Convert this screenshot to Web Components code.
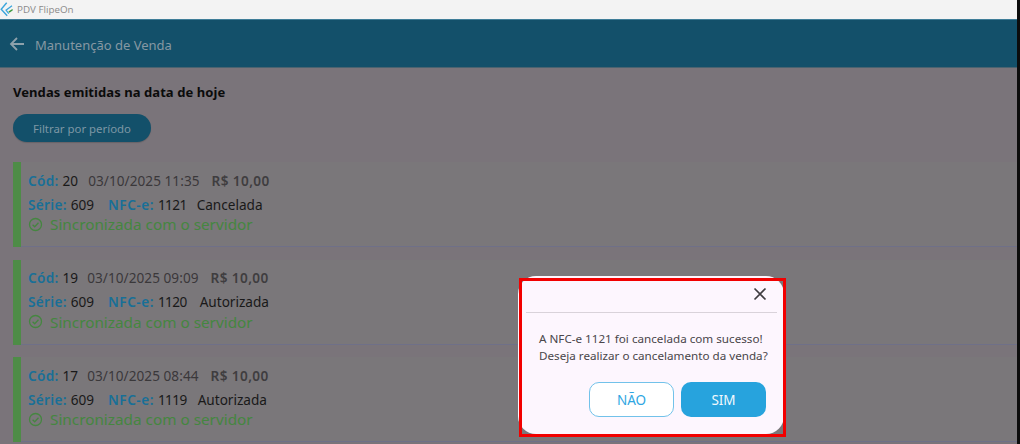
<!DOCTYPE html>
<html lang="pt-BR"><head><meta charset="utf-8"><title>PDV FlipeOn</title>
<style>
html,body{margin:0;padding:0;width:1020px;height:444px;overflow:hidden;background:#0c0c0c;font-family:"Noto Sans",sans-serif}
</style></head><body>
<pdv-window>
  <sale-row cod="20" when="03/10/2025 11:35" gap="10" nfce="1121" status="Cancelada" sgap="10"></sale-row>
  <sale-row cod="19" when="03/10/2025 09:09" gap="9" nfce="1120" status="Autorizada" sgap="13"></sale-row>
  <sale-row cod="17" when="03/10/2025 08:44" gap="9" nfce="1119" status="Autorizada" sgap="11"></sale-row>
</pdv-window>
<script>
const def=(n,html,setup)=>customElements.define(n,class extends HTMLElement{
  constructor(){super();this.attachShadow({mode:'open'}).innerHTML=html;}
  connectedCallback(){setup&&setup(this,this.shadowRoot);}
});
def('title-bar',`<style>
:host{display:flex;align-items:center;height:19px;background:#f3f3f3;border-bottom:1px solid #3f7d98;font:9.8px "Open Sans","Noto Sans",sans-serif;color:#8a8a8a;flex:none}
svg{margin-right:3px;flex:none}
</style><svg width="14" height="19" viewBox="0 0 14 19"><path d="M6.7 2.7 1.2 9.2l6 6.5" fill="none" stroke="#3aa5dc" stroke-width="1.4"/><path d="M12 5.7 6 10.2l2.8 3.4" fill="none" stroke="#3aa5dc" stroke-width="1.2"/><path d="M8.4 11.6l4-2.6.5 1.3-3.4 2.4z" fill="#3c9a40"/></svg><span>PDV FlipeOn</span>`);
def('app-header',`<style>
:host{display:flex;align-items:center;height:47px;background:#13506a;border-bottom:1px solid #4a6370;color:#8698a3;flex:none;font-size:13px}
svg{margin-left:9px;margin-right:10px;flex:none}
span{position:relative;top:1px}
</style><svg width="16" height="16" viewBox="0 0 16 16"><path d="M15 8H2.5M8 2 2 8l6 6" fill="none" stroke="#8ea1ab" stroke-width="1.8"/></svg><span>Manutenção de Venda</span>`);
def('pill-button',`<style>
:host{display:inline-flex;align-items:center;justify-content:center;width:138px;height:28px;border-radius:14px;background:#13506a;color:#7d97a5;font-size:11.4px;box-shadow:0 1px 1px rgba(0,0,0,.15)}
</style><slot></slot>`);
def('sale-row',`<style>
:host{display:flex;height:85px;font-size:13.6px;color:#191919;margin-bottom:12.5px}
.bar{width:8px;flex:none;background:#4e8c47}
.body{flex:1;background:#7a777a;border-bottom:1px solid #6f7088;padding-left:7px;min-width:0}
.l{display:flex;align-items:center;white-space:nowrap}
.l1{height:20px;padding-top:8px}
.l2{height:20px;margin-top:4px}
.l3{height:22px;margin-top:-1px;color:#458640;font-size:15.3px}
b{font-weight:600;color:#186f97;letter-spacing:.3px;margin-right:.5px}
b.nf{letter-spacing:.5px}
.num{letter-spacing:-.6px}
.when{color:#3a383a;letter-spacing:.05px}
.val{color:#3f3d3f;font-weight:600;margin-left:12px;letter-spacing:.4px}
svg{margin-right:7px;flex:none}
</style>
<div class="bar"></div><div class="body">
<div class="l l1"><b>Cód:</b>&nbsp;<span class="c"></span><span class="when"></span><span class="val">R$ 10,00</span></div>
<div class="l l2"><b>Série:</b>&nbsp;<span>609</span><b class="nf" style="margin-left:14px">NFC-e:</b>&nbsp;<span class="n num"></span><span class="s"></span></div>
<div class="l l3"><svg width="15" height="15" viewBox="0 0 15 15"><circle cx="7.5" cy="7.5" r="6" fill="none" stroke="#458640" stroke-width="1.3"/><path d="M4.6 7.7l2.1 2.1 3.8-4.1" fill="none" stroke="#458640" stroke-width="1.3"/></svg><span>Sincronizada com o servidor</span></div>
</div>`,
(h,r)=>{r.querySelector('.c').textContent=h.getAttribute('cod');
 const w=r.querySelector('.when');w.textContent=h.getAttribute('when');w.style.marginLeft=h.getAttribute('gap')+'px';
 r.querySelector('.n').textContent=h.getAttribute('nfce');
 const s=r.querySelector('.s');s.textContent=h.getAttribute('status');s.style.marginLeft=h.getAttribute('sgap')+'px';});
def('confirm-dialog',`<style>
:host{position:absolute;left:518px;top:276px;width:266px;height:158px;background:#fdf6fe;border-radius:18px;box-sizing:border-box;padding:0 7px 0 8px;color:#4a464b;font-size:11.66px;display:block}
.top{display:flex;justify-content:flex-end;align-items:center;height:36px;border-bottom:1px solid #d9d2da;padding-right:10px}
.msg{line-height:17px;margin:17px 0 0 13px;white-space:nowrap}
.btns{display:flex;justify-content:flex-end;gap:7px;margin-top:18px;padding-right:11px}
.btn{width:85px;height:35px;box-sizing:border-box;border-radius:10px;display:flex;align-items:center;justify-content:center;font-size:13.5px}
.no{background:#fff;border:1.5px solid #72c2ea;color:#2fa6e2}
.yes{background:#27a3dd;color:#f2f9fd}
</style><div class="top"><svg width="14" height="14" viewBox="0 0 14 14"><path d="M1.5 1.5l11 11M12.5 1.5l-11 11" stroke="#3f3c40" stroke-width="1.7" fill="none"/></svg></div>
<div class="msg">A NFC-e 1121 foi cancelada com sucesso!<br>Deseja realizar o cancelamento da venda?</div>
<div class="btns"><div class="btn no">NÃO</div><div class="btn yes">SIM</div></div>`);
def('pdv-window',`<style>
:host{display:flex;flex-direction:column;width:1017px;height:444px;position:relative;overflow:hidden;background:#7a747a}
main{flex:1;padding:0 0 0 13px;overflow:hidden}
h1{margin:15px 0 13px;font-size:13px;font-weight:700;color:#0b0b0b;line-height:18px;letter-spacing:.07px}
.list{margin-top:20px}
.red{position:absolute;left:519px;top:278px;width:267px;height:159px;box-sizing:border-box;border:3px solid #f20000;pointer-events:none}
</style><title-bar></title-bar><app-header></app-header>
<main><h1>Vendas emitidas na data de hoje</h1><pill-button>Filtrar por período</pill-button><div class="list"><slot></slot></div></main>
<confirm-dialog></confirm-dialog><div class="red"></div>`);
</script></body></html>
